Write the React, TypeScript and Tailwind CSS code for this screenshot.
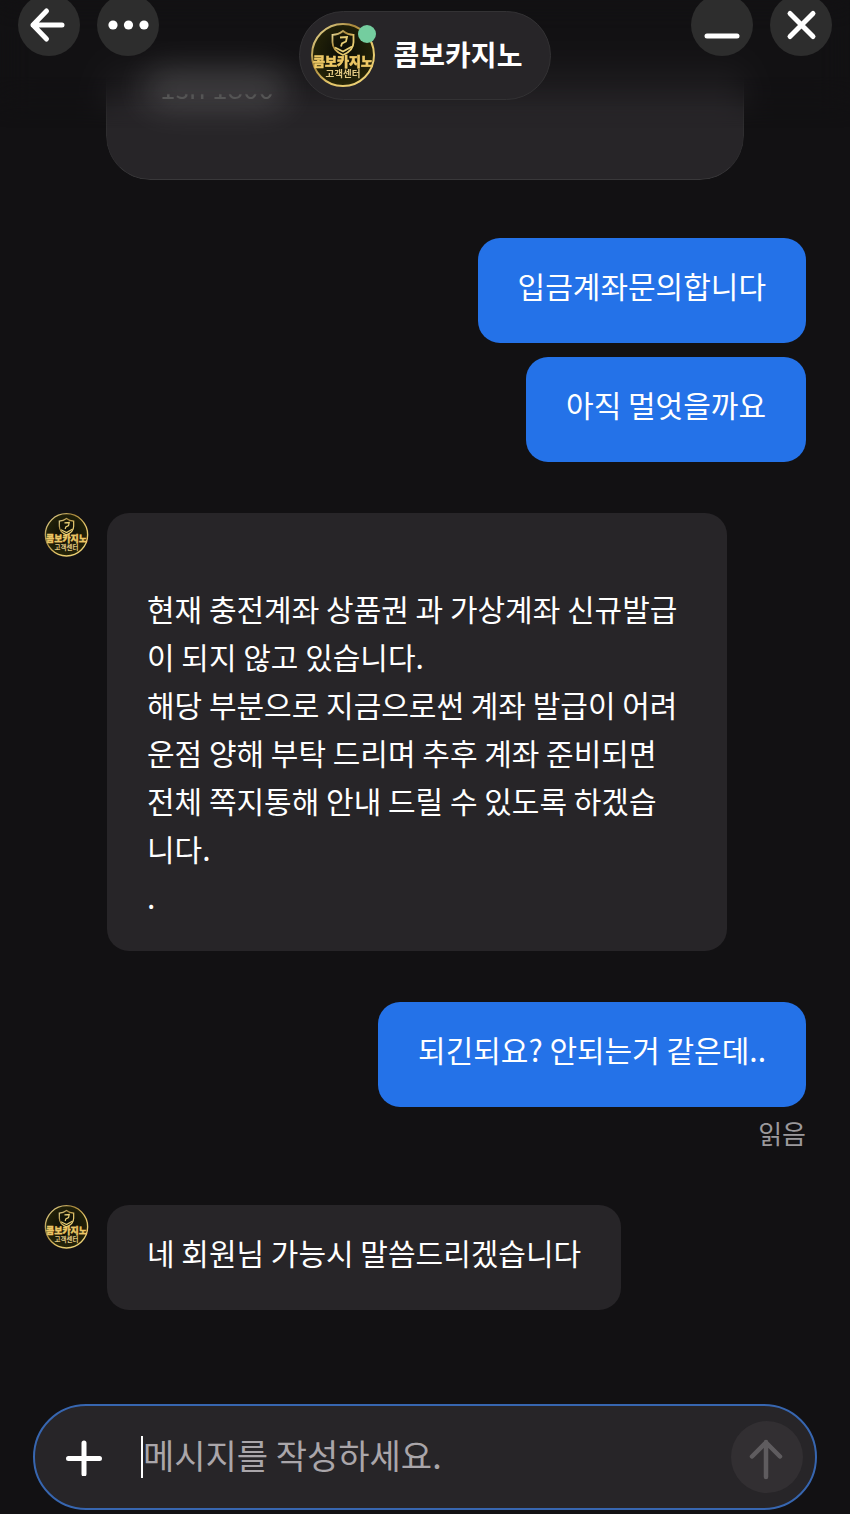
import React, { useState } from 'react';

interface Message {
  id: number;
  from: 'me' | 'agent';
  texts: string[];
  read?: boolean;
}

const messages: Message[] = [
  { id: 1, from: 'me', texts: ['입금계좌문의합니다', '아직 멀엇을까요'] },
  {
    id: 2,
    from: 'agent',
    texts: [
      '\n현재 충전계좌 상품권 과 가상계좌 신규발급이 되지 않고 있습니다.\n해당 부분으로 지금으로썬 계좌 발급이 어려운점 양해 부탁 드리며 추후 계좌 준비되면 전체 쪽지통해 안내 드릴 수 있도록 하겠습\n니다.\n.',
    ],
  },
  { id: 3, from: 'me', texts: ['되긴되요? 안되는거 같은데..'], read: true },
  { id: 4, from: 'agent', texts: ['네 회원님 가능시 말씀드리겠습니다'] },
];

const Logo: React.FC<{ className: string }> = ({ className }) => (
  <svg viewBox="0 0 66 66" className={`font-['Liberation_Sans','Noto_Sans_CJK_KR',sans-serif] ${className}`} role="img" aria-label="콤보카지노 고객센터">
    <defs>
      <linearGradient id="gold" x1="0" y1="0" x2="1" y2="1">
        <stop offset="0" stopColor="#f3e7a4" />
        <stop offset="0.35" stopColor="#a8873a" />
        <stop offset="0.6" stopColor="#e3c468" />
        <stop offset="1" stopColor="#efd67c" />
      </linearGradient>
      <radialGradient id="disc" cx="0.5" cy="0.45" r="0.55">
        <stop offset="0" stopColor="#0a0c06" />
        <stop offset="1" stopColor="#262508" />
      </radialGradient>
    </defs>
    <circle cx="33" cy="32" r="31" fill="url(#disc)" stroke="url(#gold)" strokeWidth="2" />
    <path
      d="M33 8c3 2.500 6.500 3.800 10.500 3.800v7.500c0 6-4 10-10.500 12.700C26.500 29.300 22.500 25.300 22.500 19.300v-7.500C26.500 11.800 30 10.500 33 8z"
      fill="none"
      stroke="url(#gold)"
      strokeWidth="1.800"
    />
    <path d="M30 14.500l7-.5-1 4.500-4 2-1 3M25 24.500l8 4 9-5" fill="none" stroke="#e8cf75" strokeWidth="1.800" />
    <text x="33" y="43" textAnchor="middle" fontSize="13" fontWeight="900" fill="#ecc765" stroke="#ecc765" strokeWidth="0.500">
      콤보카지노
    </text>
    <text x="33" y="54" textAnchor="middle" fontSize="9.500" fontWeight="700" fill="#e2c984">
      고객센터
    </text>
  </svg>
);

const IconButton: React.FC<{ label: string; children: React.ReactNode }> = ({ label, children }) => (
  <button type="button" aria-label={label} className="flex h-[62px] w-[62px] items-center justify-center rounded-full bg-[#2d2d2d] text-white">
    <svg viewBox="0 0 62 62" className="h-full w-full" fill="none" stroke="currentColor" strokeWidth="5" strokeLinecap="round" strokeLinejoin="round">
      {children}
    </svg>
  </button>
);

const Bubble: React.FC<{ mine: boolean; text: string }> = ({ mine, text }) => (
  <p
    className={`min-h-[105px] max-w-[620px] rounded-[22px] px-10 pt-[23px] pb-[31px] text-[30px] leading-[48px] whitespace-pre-line text-white ${mine ? 'bg-[#2472e8]' : 'bg-[#272528]'}`}
  >
    {text}
  </p>
);

const App: React.FC = () => {
  const [draft, setDraft] = useState('');

  return (
    <div className="relative flex min-h-screen flex-col overflow-hidden bg-[#121113] font-['Noto_Sans_CJK_KR',sans-serif]">
      {/* Blur under the header, fades into the messages */}
      <div className="absolute inset-x-0 top-0 z-10 h-32 mask-b-from-60% mask-b-to-100% backdrop-blur-lg" />

      {/* Header */}
      <header className="absolute inset-x-0 top-0 z-20 flex items-start justify-between px-[18px]">
        <div className="-mt-[6px] flex gap-[17px]">
          <IconButton label="뒤로">
            <path d="M44 31H15M28.500 17L15 31l13.500 14" />
          </IconButton>
          <IconButton label="더보기">
            <g fill="currentColor" stroke="none">
              <circle cx="16" cy="31" r="4.600" />
              <circle cx="31.500" cy="31" r="4.600" />
              <circle cx="47" cy="31" r="4.600" />
            </g>
          </IconButton>
        </div>
        <div className="mt-[11px] flex h-[89px] items-center gap-[18px] rounded-full border border-[#333234] bg-[#272528] pr-7 pl-[10px]">
          <div className="relative">
            <Logo className="h-[66px] w-[66px]" />
            <span className="absolute top-0.5 right-0 h-[18px] w-[18px] rounded-full bg-[#74cd9f]" />
          </div>
          <h1 className="pb-1 text-[28px] font-bold text-white">콤보카지노</h1>
        </div>
        <div className="-mt-[6px] flex gap-[17px]">
          <IconButton label="최소화">
            <path d="M16 42H46" />
          </IconButton>
          <IconButton label="닫기">
            <path d="M20 19.500L43 42.500M43 19.500L20 42.500" />
          </IconButton>
        </div>
      </header>

      {/* Messages */}
      <main className="flex flex-grow flex-col px-[44px]">
        <div className="ml-[62px] h-[180px] max-w-[638px] rounded-b-[44px] border-x border-b border-x-[#2e2d2f] border-b-[#39383a] bg-[#272528] mask-t-from-40% mask-t-to-70%" />
        <div className="absolute top-[68px] left-[144px] z-10 h-10 w-[144px] rounded-full bg-white/15 blur-lg" />
        <p className="absolute top-[71px] left-[160px] z-10 bg-linear-to-b from-transparent from-70% to-[#555555] to-75% bg-clip-text text-[28px] leading-8 text-transparent">
          1sn 1800
        </p>

        <div className="mt-[58px] flex flex-col gap-[51px]">
          {messages.map((message) =>
            message.from === 'me' ? (
              <div key={message.id} className="flex flex-col items-end gap-[14px]">
                {message.texts.map((text) => (
                  <Bubble key={text} mine text={text} />
                ))}
                {message.read && <span className="-mt-[9px] text-[26px] leading-[42px] text-[#9b999c]">읽음</span>}
              </div>
            ) : (
              <div key={message.id} className="flex items-start gap-[18px]">
                <Logo className="h-[45px] w-[45px] flex-shrink-0" />
                {message.texts.map((text) => (
                  <Bubble key={text} mine={false} text={text} />
                ))}
              </div>
            )
          )}
        </div>
      </main>

      {/* Composer */}
      <form
        onSubmit={(e) => e.preventDefault()}
        className="mx-[33px] mb-1 flex h-[106px] items-center rounded-full border-2 border-[#3766b0] bg-[#272528] pr-3 pl-[30px]"
      >
        <button type="button" aria-label="첨부" className="text-white">
          <svg viewBox="0 0 38 38" className="h-[38px] w-[38px]" fill="none" stroke="currentColor" strokeWidth="5" strokeLinecap="round">
            <path d="M19 5v31M3.500 20.500h31" />
          </svg>
        </button>
        <span className="ml-[38px] h-[42px] w-[2px] bg-white" />
        <input
          type="text"
          aria-label="메시지"
          value={draft}
          onChange={(e) => setDraft(e.target.value)}
          placeholder="메시지를 작성하세요."
          className="min-w-0 flex-grow bg-transparent pb-1.5 text-[34px] text-white outline-none placeholder:text-[#aaa6aa]"
        />
        <button type="submit" aria-label="보내기" className="h-[72px] w-[72px] rounded-full bg-[#322f32] text-[#5f5c5f]">
          <svg viewBox="0 0 72 72" className="h-full w-full" fill="none" stroke="currentColor" strokeWidth="4.500" strokeLinecap="round" strokeLinejoin="round">
            <path d="M35 56V21M21 35.500L35 21.500l14 14" />
          </svg>
        </button>
      </form>
    </div>
  );
};

export default App;
